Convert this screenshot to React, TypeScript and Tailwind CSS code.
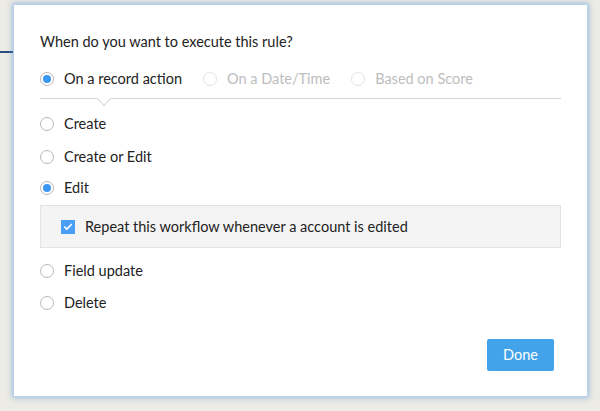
import { Check } from "lucide-react";

type Opt = { label: string; checked?: boolean; disabled?: boolean };

function Radio({ label, checked, disabled }: Opt) {
  return (
    <div className="flex items-center h-5">
      <span
        className={`w-[14px] h-[14px] rounded-full border flex items-center justify-center bg-white ${
          disabled ? "border-[#e3e3e3]" : "border-[#b9b9b9]"
        }`}
      >
        {checked && <span className="w-2 h-2 rounded-full bg-[#3b97f3]" />}
      </span>
      <span className={`ml-[10px] ${disabled ? "text-[#bdbdbd]" : "text-[#222]"}`}>{label}</span>
    </div>
  );
}

export default function App() {
  return (
    <div
      className="relative w-[600px] h-[411px] bg-[#ecebe5] overflow-hidden"
      style={{ fontFamily: "Lato, 'Open Sans', sans-serif" }}
    >
      {/* line behind the dialog */}
      <div className="absolute left-0 top-[51px] w-[20px] h-[2px] bg-[#2d4f82]" />

      <div className="relative ml-[14px] mt-[5px] w-[573px] h-[391px] bg-white shadow-[0_0_0_1px_#b9d2ea,0_0_5px_2px_rgba(96,150,205,0.55)] pt-[27px] px-[26px] text-[14.5px] text-[#222]">
        <div className="leading-5 h-5 flex items-center">When do you want to execute this rule?</div>

        {/* trigger type */}
        <div className="relative mt-[17px] border-b border-[#d6d6d6] pb-[9px] flex gap-[21px]">
          <Radio label="On a record action" checked />
          <Radio label="On a Date/Time" disabled />
          <Radio label="Based on Score" disabled />
          <span className="absolute left-[59px] -bottom-[6px] w-[10px] h-[10px] bg-white border-r border-b border-[#d6d6d6] rotate-45" />
        </div>

        <div className="mt-[15px] flex flex-col">
          <Radio label="Create" />
          <div className="mt-[13px]">
            <Radio label="Create or Edit" />
          </div>
          <div className="mt-[11px]">
            <Radio label="Edit" checked />
          </div>
          <div className="mt-[7px] h-[43px] bg-[#f4f4f4] border border-[#e3e3e3] flex items-center pl-[20px]">
            <span className="w-[14px] h-[14px] bg-[#4a9ff5] flex items-center justify-center">
              <Check className="w-[10px] h-[10px] text-white" strokeWidth={4} />
            </span>
            <span className="ml-[10px]">Repeat this workflow whenever a account is edited</span>
          </div>
          <div className="mt-[13px]">
            <Radio label="Field update" />
          </div>
          <div className="mt-[12px]">
            <Radio label="Delete" />
          </div>
        </div>

        <div className="mt-[26px] flex justify-end pr-[7px]">
          <button className="w-[67px] h-[32px] rounded-[2px] bg-[#43a3ea] text-white text-[14.5px]">Done</button>
        </div>
      </div>
    </div>
  );
}
